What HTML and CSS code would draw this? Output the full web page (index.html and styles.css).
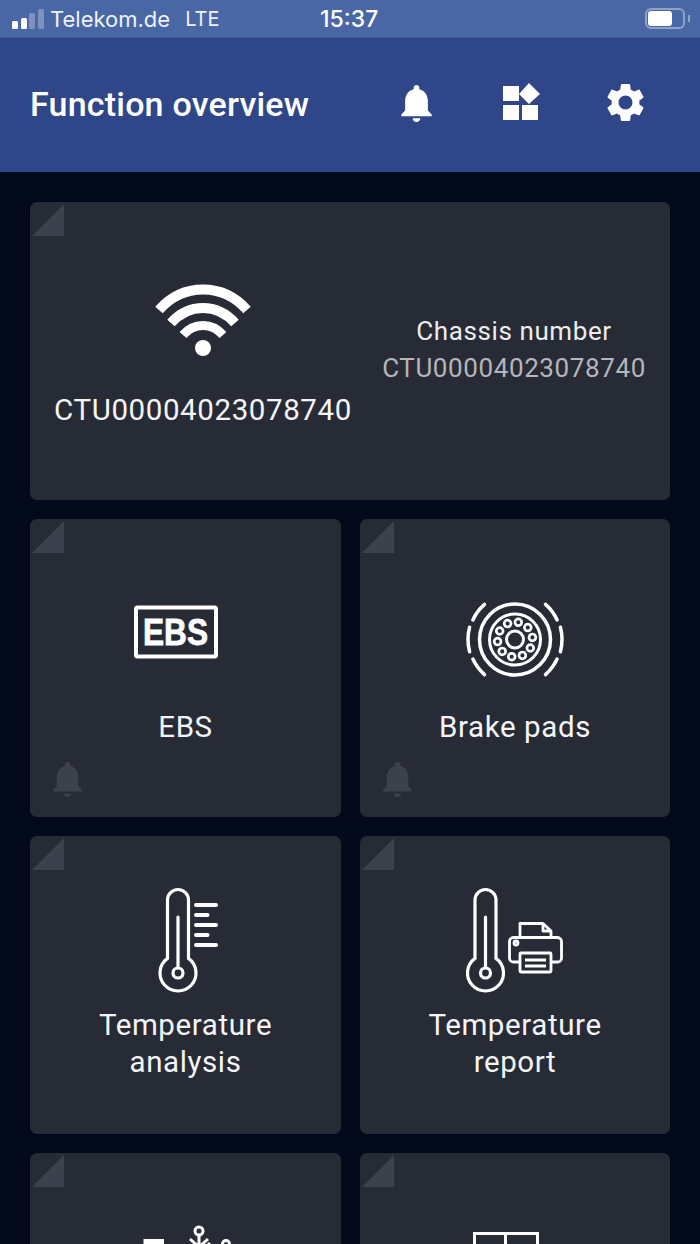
FILE: index.html
```html
<!DOCTYPE html>
<html lang="en">
<head>
    <meta charset="UTF-8">
    <meta name="viewport" content="width=device-width, initial-scale=1.0">
    <title>Function overview</title>
    <link rel="stylesheet" href="styles.css">
</head>
<body>
    <div class="status-bar">
        <div class="status-left">
            <div class="signal">
                <span class="bar bar-1"></span>
                <span class="bar bar-2"></span>
                <span class="bar bar-3 off"></span>
                <span class="bar bar-4 off"></span>
            </div>
            <span class="carrier">Telekom.de</span>
            <span class="network">LTE</span>
        </div>
        <div class="clock">15:37</div>
        <div class="battery">
            <div class="battery-body"><div class="battery-level"></div></div>
            <div class="battery-tip"></div>
        </div>
    </div>

    <header class="app-header">
        <h1>Function overview</h1>
        <nav class="header-icons">
            <svg class="icon-bell" viewBox="4 2.5 16 19.5" aria-label="Alerts">
                <path fill="#fff" d="M12 22c1.1 0 2-.9 2-2h-4c0 1.100.89 2 2 2zm6-6v-5c0-3.070-1.640-5.640-4.500-6.320V4c0-.83-.67-1.500-1.500-1.500s-1.500.67-1.500 1.500v.68C7.630 5.360 6 7.920 6 11v5l-2 2v1h16v-1l-2-2z"/>
            </svg>
            <svg class="icon-grid" viewBox="0 0 37 37" aria-label="Functions">
                <path fill="#fff" d="M0 3h16v15H0zM0 22h16v15H0zM19 22h16v15H19zM26 0 37 11 26 21 16 11z"/>
            </svg>
            <svg class="icon-gear" viewBox="2.4 2 19.2 20" aria-label="Settings">
                <path fill="#fff" d="M19.140 12.940c.04-.3.06-.61.06-.94 0-.32-.02-.64-.07-.94l2.030-1.580c.18-.14.23-.41.12-.61l-1.920-3.320c-.12-.22-.37-.29-.59-.22l-2.390.96c-.5-.38-1.030-.7-1.620-.94l-.36-2.540c-.04-.24-.24-.41-.48-.41h-3.840c-.24 0-.43.17-.47.41l-.36 2.540c-.59.24-1.130.57-1.620.94l-2.390-.96c-.22-.08-.47 0-.59.22L2.740 8.870c-.12.21-.08.47.12.61l2.030 1.580c-.05.3-.09.63-.09.94s.02.64.07.94l-2.030 1.580c-.18.14-.23.41-.12.61l1.920 3.320c.12.22.37.29.59.22l2.390-.96c.5.38 1.030.7 1.620.94l.36 2.540c.05.24.24.41.48.41h3.840c.24 0 .44-.17.47-.41l.36-2.540c.59-.24 1.130-.56 1.620-.94l2.390.96c.22.08.47 0 .59-.22l1.920-3.320c.12-.22.07-.47-.12-.61l-2.010-1.580zM12 15.600c-1.980 0-3.600-1.620-3.600-3.600s1.620-3.600 3.600-3.600 3.600 1.620 3.600 3.600-1.620 3.600-3.600 3.600z"/>
            </svg>
        </nav>
    </header>

    <main class="tiles">
        <section class="tile tile-wide">
            <div class="corner"></div>
            <div class="device">
                <svg class="wifi-icon" viewBox="0 0 100 72" aria-label="Connected">
                    <g fill="none" stroke="#fff" stroke-width="10">
                        <path d="M6 26C30 -1.300 70 -1.300 94 26"/>
                        <path d="M18 39C36 19 64 19 82 39"/>
                        <path stroke-width="9" d="M30 51C41 38.300 59 38.300 70 51"/>
                    </g>
                    <circle cx="50" cy="64" r="8" fill="#fff"/>
                </svg>
                <div class="device-id">CTU00004023078740</div>
            </div>
            <div class="chassis">
                <div class="chassis-title">Chassis number</div>
                <div class="chassis-value">CTU00004023078740</div>
            </div>
        </section>

        <section class="tile">
            <div class="corner"></div>
            <svg class="tile-icon" viewBox="0 0 120 120">
                <rect x="10" y="19.500" width="80" height="49" rx="1.500" fill="none" stroke="#fff" stroke-width="4"/>
                <text x="17" y="56.500" textLength="65" lengthAdjust="spacingAndGlyphs" class="ebs-mark">EBS</text>
            </svg>
            <div class="tile-label">EBS</div>
            <svg class="tile-bell" viewBox="4 2.5 16 19.5">
                <path d="M12 22c1.100 0 2-.9 2-2h-4c0 1.100.89 2 2 2zm6-6v-5c0-3.070-1.640-5.640-4.500-6.320V4c0-.83-.67-1.500-1.500-1.500s-1.500.67-1.500 1.500v.68C7.630 5.360 6 7.920 6 11v5l-2 2v1h16v-1l-2-2z"/>
            </svg>
        </section>

        <section class="tile">
            <div class="corner"></div>
            <svg class="tile-icon" viewBox="0 0 120 120">
                <g fill="none" stroke="#fff" transform="translate(60 51.500)">
                    <circle r="35.500" stroke-width="3.500"/>
                    <circle r="25.500" stroke-width="3"/>
                    <circle r="8.500" stroke-width="3"/>
                    <g stroke-width="2.700">
                        <circle cx="3.300" cy="-17.200" r="3.400"/>
                        <circle cx="12.800" cy="-11.900" r="3.400"/>
                        <circle cx="17.400" cy="-2.100" r="3.400"/>
                        <circle cx="15.300" cy="8.500" r="3.400"/>
                        <circle cx="7.400" cy="15.900" r="3.400"/>
                        <circle cx="-3.300" cy="17.200" r="3.400"/>
                        <circle cx="-12.800" cy="11.900" r="3.400"/>
                        <circle cx="-17.400" cy="2.100" r="3.400"/>
                        <circle cx="-15.300" cy="-8.500" r="3.400"/>
                        <circle cx="-7.400" cy="-15.900" r="3.400"/>
                    </g>
                    <g stroke-width="3.500" stroke-linecap="round">
                        <path d="M-45.400 -12.200A47 47 0 0 0 -45.400 12.200"/>
                        <path d="M45.400 -12.200A47 47 0 0 1 45.400 12.200"/>
                        <path d="M-42.100 -19.600A46.500 46.500 0 0 1 -30.500 -35.100"/>
                        <path d="M42.100 -19.600A46.500 46.500 0 0 0 30.500 -35.100"/>
                        <path d="M-42.100 19.600A46.500 46.500 0 0 0 -30.500 35.100"/>
                        <path d="M42.100 19.600A46.500 46.500 0 0 1 30.500 35.100"/>
                    </g>
                </g>
            </svg>
            <div class="tile-label">Brake pads</div>
            <svg class="tile-bell" viewBox="4 2.5 16 19.5">
                <path d="M12 22c1.100 0 2-.9 2-2h-4c0 1.100.89 2 2 2zm6-6v-5c0-3.070-1.640-5.640-4.500-6.320V4c0-.83-.67-1.500-1.500-1.500s-1.500.67-1.500 1.500v.68C7.630 5.360 6 7.920 6 11v5l-2 2v1h16v-1l-2-2z"/>
            </svg>
        </section>

        <section class="tile">
            <div class="corner"></div>
            <svg class="tile-icon" viewBox="0 0 120 120">
                <g fill="none" stroke="#fff" stroke-width="3.200">
                    <path d="M41.500 72.400V14a10.500 10.500 0 0 1 21 0V72.400a18 18 0 1 1-21 0z"/>
                    <circle cx="52" cy="87" r="5"/>
                    <path d="M52 81V31" stroke-linecap="round"/>
                    <g stroke-width="4" stroke-linecap="round">
                        <path d="M70 19H90"/>
                        <path d="M70 29H81.500"/>
                        <path d="M70 39H90"/>
                        <path d="M70 49H81.500"/>
                        <path d="M70 59H90"/>
                    </g>
                </g>
            </svg>
            <div class="tile-label">Temperature<br>analysis</div>
        </section>

        <section class="tile">
            <div class="corner"></div>
            <svg class="tile-icon" viewBox="0 0 120 120">
                <g fill="none" stroke="#fff" stroke-width="3.200">
                    <path d="M20 72.400V14a10.500 10.500 0 0 1 21 0V72.400a18 18 0 1 1-21 0z"/>
                    <circle cx="30.500" cy="87" r="5"/>
                    <path d="M30.500 81V31" stroke-linecap="round"/>
                    <g stroke-width="2.800" stroke-linejoin="round">
                        <path d="M65 51V37.500H88L96 45V51"/>
                        <path d="M88 37.500V45H96"/>
                        <path d="M65 76H58.500a4 4 0 0 1-4-4V55.500a4 4 0 0 1 4-4H102.500a4 4 0 0 1 4 4V72a4 4 0 0 1-4 4H96"/>
                        <rect x="65" y="67" width="31" height="19" rx="1"/>
                        <path d="M70 74H91M70 80H91"/>
                        <circle cx="61" cy="57" r="2"/>
                    </g>
                </g>
            </svg>
            <div class="tile-label">Temperature<br>report</div>
        </section>

        <section class="tile tile-cut">
            <div class="corner"></div>
            <svg class="tile-icon" viewBox="0 0 120 120">
                <g fill="none" stroke="#fff" stroke-width="3">
                    <path d="M20 50V38.500H38" stroke-width="5"/>
                    <circle cx="73" cy="28" r="4"/>
                    <path d="M73 32V50M64 36 73 44 82 36"/>
                    <path d="M84 40 78 46"/>
                    <circle cx="100" cy="41" r="3.500"/>
                </g>
            </svg>
        </section>

        <section class="tile tile-cut">
            <div class="corner"></div>
            <svg class="tile-icon" viewBox="0 0 120 120">
                <g fill="none" stroke="#fff" stroke-width="3">
                    <rect x="19.500" y="30.500" width="63" height="60"/>
                    <path d="M50.500 30.500V90.500"/>
                </g>
            </svg>
        </section>
    </main>
</body>
</html>
```

FILE: styles.css
```css
html, body {
    margin: 0;
    height: 1244px;
    overflow: hidden;
}
body {
    background: #030a1c;
    color: #fff;
    font-family: Roboto, "Liberation Sans", sans-serif;
}

/* phone status bar */
.status-bar {
    height: 37px;
    background: #4a67a5;
    border-bottom: 1px solid #3f5a99;
    display: flex;
    align-items: center;
    position: relative;
    padding: 0 10px 0 12px;
    font-family: Inter, Roboto, sans-serif;
    font-size: 22px;
}
.status-left {
    display: flex;
    align-items: center;
    color: #eef1f8;
}
.signal {
    display: flex;
    align-items: flex-end;
    gap: 2.500px;
    height: 20px;
    margin-right: 6.500px;
}
.bar {
    width: 6px;
    background: #fff;
    border-radius: 1.500px;
}
.bar.off {
    background: #7d92c0;
}
.bar-1 { height: 8px; }
.bar-2 { height: 11px; }
.bar-3 { height: 16px; }
.bar-4 { height: 20px; }
.network {
    margin-left: 15px;
    font-size: 20px;
}
.clock {
    position: absolute;
    left: 320px;
    font-size: 23px;
    font-weight: 500;
}
.battery {
    margin-left: auto;
    display: flex;
    align-items: center;
    gap: 3px;
}
.battery-body {
    box-sizing: border-box;
    width: 40px;
    height: 21px;
    padding: 1px;
    border: 2px solid #8fa2cb;
    border-radius: 6px;
}
.battery-level {
    width: 24px;
    height: 15px;
    background: #fff;
    border-radius: 3px;
}
.battery-tip {
    width: 2px;
    height: 7px;
    background: #8fa2cb;
}

/* app header */
.app-header {
    height: 134px;
    background: #2f4689;
    display: flex;
    align-items: center;
    padding: 0 56px 0 30px;
}
.app-header h1 {
    margin: 0 0 2px;
    font-size: 34px;
    font-weight: 500;
    letter-spacing: 0.2px;
}
.header-icons {
    margin-left: auto;
    margin-bottom: 5px;
    display: flex;
    align-items: flex-start;
    gap: 67px;
}
.icon-bell {
    width: 31px;
    height: 37px;
    margin: 2px 4px 0 0;
}
.icon-grid {
    width: 37px;
    height: 37px;
}
.icon-gear {
    width: 37px;
    height: 39px;
}

/* function tiles */
.tiles {
    display: grid;
    grid-template-columns: 311px 310px;
    grid-auto-rows: 298px;
    gap: 19px;
    padding: 30px 30px 0;
}
.tile {
    position: relative;
    background: #272b36;
    border-radius: 7px;
    padding-bottom: 3px;
    display: flex;
    flex-direction: column;
    align-items: center;
    justify-content: center;
}
.tile-wide {
    grid-column: 1 / 3;
    flex-direction: row;
    justify-content: flex-start;
    padding-bottom: 0;
}
/* bottom row, only the top of it is on screen */
.tile-cut {
    justify-content: flex-start;
    padding: 50px 0 0;
}
.corner {
    position: absolute;
    left: 2px;
    top: 2px;
    width: 32px;
    height: 32px;
    background: #3c414d;
    clip-path: polygon(100% 0, 100% 100%, 0 100%);
}
.tile-icon {
    width: 120px;
    height: 120px;
    flex: none;
}
.tile-label {
    margin-top: 1px;
    font-size: 29.500px;
    line-height: 37px;
    letter-spacing: 0.6px;
    text-align: center;
    color: #f4f5f7;
}
.tile-bell {
    position: absolute;
    left: 23px;
    bottom: 20px;
    width: 29px;
    height: 35px;
    fill: #3c414d;
}
.ebs-mark {
    fill: #fff;
    stroke: #fff;
    stroke-width: 0.8px;
    font-family: "Liberation Sans", sans-serif;
    font-size: 36px;
    font-weight: 700;
}

/* wide tile */
.device {
    width: 346px;
    padding-top: 10.500px;
    display: flex;
    flex-direction: column;
    align-items: center;
}
.wifi-icon {
    width: 100px;
    height: 72px;
    margin-bottom: 35.500px;
}
.device-id {
    font-size: 29.500px;
    line-height: 37px;
    letter-spacing: 0.6px;
    color: #f4f5f7;
}
.chassis {
    flex: 1;
    text-align: center;
    font-size: 26px;
    line-height: 37px;
    letter-spacing: 0.6px;
    margin: 0 18px 3px 0;
}
.chassis-title {
    color: #eceded;
}
.chassis-value {
    color: #b4b6ba;
}
```
